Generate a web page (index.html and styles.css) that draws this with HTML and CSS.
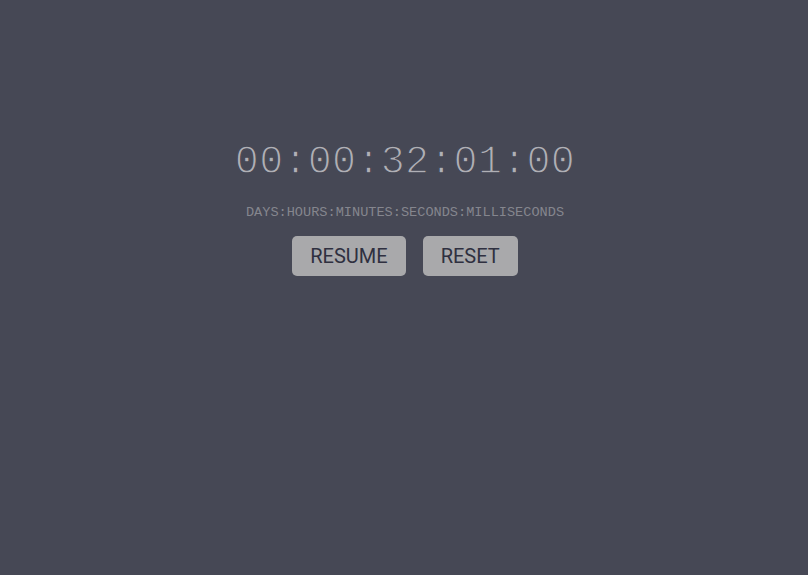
FILE: index.html
```html
<!DOCTYPE html>
<html>
<head>
<meta charset="utf-8">
<link rel="stylesheet" href="styles.css">
</head>
<body>
<main class="stopwatch">
  <div class="time">00:00:32:01:00</div>
  <div class="label">DAYS:HOURS:MINUTES:SECONDS:MILLISECONDS</div>
  <div class="controls">
    <button class="btn">RESUME</button>
    <button class="btn">RESET</button>
  </div>
</main>
</body>
</html>
```
FILE: styles.css
```css
html, body {
  margin: 0;
  height: 100%;
  background: #464855;
}
.stopwatch {
  display: flex;
  flex-direction: column;
  align-items: center;
  padding-top: 137px;
  padding-left: 2px;
}
.time {
  font-family: "Liberation Mono", monospace;
  font-size: 40px;
  letter-spacing: 0.3px;
  color: #b0b0b6;
  -webkit-text-stroke: 1.3px #464855;
  line-height: 52px;
}
.label {
  font-family: "Liberation Mono", monospace;
  font-size: 13.6px;
  color: #85868e;
  margin-top: 16px;
  line-height: 16px;
}
.controls {
  display: flex;
  gap: 17px;
  margin-top: 15px;
}
.btn {
  font-family: Roboto, "Liberation Sans", sans-serif;
  font-size: 20px;
  color: #2f3040;
  background: #a9a9ab;
  border: none;
  border-radius: 5px;
  height: 40px;
  padding: 0 18px;
}
```
